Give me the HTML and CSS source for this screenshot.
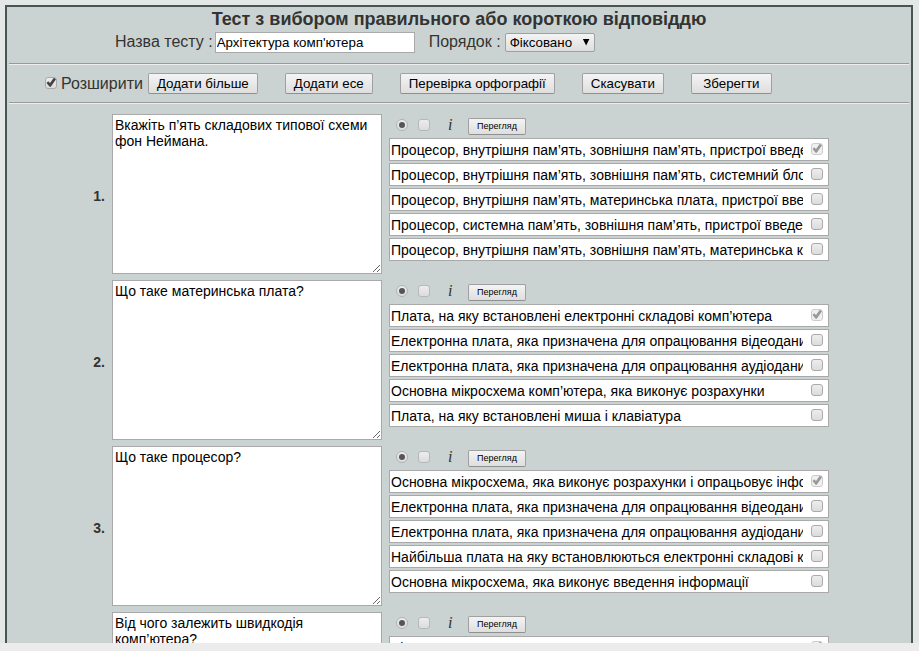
FILE: index.html
```html
<!DOCTYPE html>
<html lang="uk">
<head>
<meta charset="utf-8">
<title>Редактор тесту</title>
<link rel="stylesheet" href="styles.css">
</head>
<body>
<main class="viewport">
<form class="panel">
  <h1 class="title">Тест з вибором правильного або короткою відповіддю</h1>
  <div class="settings">
    <label for="test-name">Назва тесту :</label>
    <input class="name" id="test-name" type="text" value="Архітектура комп'ютера">
    <label class="order-label" for="order">Порядок :</label>
    <span class="select"><select id="order"><option>Фіксовано</option></select></span>
  </div>
  <hr>
  <div class="toolbar">
    <label class="expand"><input class="check" type="checkbox" checked>Розширити</label>
    <div class="actions">
      <button class="button" type="button">Додати більше</button>
      <button class="button" type="button">Додати есе</button>
      <button class="button" type="button">Перевірка орфографії</button>
      <button class="button" type="button">Скасувати</button>
      <button class="button" type="button">Зберегти</button>
    </div>
  </div>
  <hr>
  <ol class="questions">
    <li class="question">
      <span class="number">1.</span>
      <textarea aria-label="Питання 1">Вкажіть п’ять складових типової схеми фон Неймана.</textarea>
      <div class="answers">
        <div class="options"><input class="radio" type="radio" name="type1" aria-label="Тип 1" checked><input class="check" type="checkbox" aria-label="Есе 1"><i class="info">i</i><button class="button small" type="button">Перегляд</button></div>
        <div class="answer"><input type="text" aria-label="Відповідь 1" value="Процесор, внутрішня пам’ять, зовнішня пам’ять, пристрої введення, пристрої виведення"><input class="check" type="checkbox" aria-label="Правильна" checked></div>
        <div class="answer"><input type="text" aria-label="Відповідь 2" value="Процесор, внутрішня пам’ять, зовнішня пам’ять, системний блок, монітор"><input class="check" type="checkbox" aria-label="Правильна"></div>
        <div class="answer"><input type="text" aria-label="Відповідь 3" value="Процесор, внутрішня пам’ять, материнська плата, пристрої введення"><input class="check" type="checkbox" aria-label="Правильна"></div>
        <div class="answer"><input type="text" aria-label="Відповідь 4" value="Процесор, системна пам’ять, зовнішня пам’ять, пристрої введення"><input class="check" type="checkbox" aria-label="Правильна"></div>
        <div class="answer"><input type="text" aria-label="Відповідь 5" value="Процесор, внутрішня пам’ять, зовнішня пам’ять, материнська карта"><input class="check" type="checkbox" aria-label="Правильна"></div>
      </div>
    </li>
    <li class="question">
      <span class="number">2.</span>
      <textarea aria-label="Питання 2">Що таке материнська плата?</textarea>
      <div class="answers">
        <div class="options"><input class="radio" type="radio" name="type2" aria-label="Тип 2" checked><input class="check" type="checkbox" aria-label="Есе 2"><i class="info">i</i><button class="button small" type="button">Перегляд</button></div>
        <div class="answer"><input type="text" aria-label="Відповідь 1" value="Плата, на яку встановлені електронні складові комп’ютера"><input class="check" type="checkbox" aria-label="Правильна" checked></div>
        <div class="answer"><input type="text" aria-label="Відповідь 2" value="Електронна плата, яка призначена для опрацювання відеоданих"><input class="check" type="checkbox" aria-label="Правильна"></div>
        <div class="answer"><input type="text" aria-label="Відповідь 3" value="Електронна плата, яка призначена для опрацювання аудіоданих"><input class="check" type="checkbox" aria-label="Правильна"></div>
        <div class="answer"><input type="text" aria-label="Відповідь 4" value="Основна мікросхема комп’ютера, яка виконує розрахунки"><input class="check" type="checkbox" aria-label="Правильна"></div>
        <div class="answer"><input type="text" aria-label="Відповідь 5" value="Плата, на яку встановлені миша і клавіатура"><input class="check" type="checkbox" aria-label="Правильна"></div>
      </div>
    </li>
    <li class="question">
      <span class="number">3.</span>
      <textarea aria-label="Питання 3">Що таке процесор?</textarea>
      <div class="answers">
        <div class="options"><input class="radio" type="radio" name="type3" aria-label="Тип 3" checked><input class="check" type="checkbox" aria-label="Есе 3"><i class="info">i</i><button class="button small" type="button">Перегляд</button></div>
        <div class="answer"><input type="text" aria-label="Відповідь 1" value="Основна мікросхема, яка виконує розрахунки і опрацьовує інформацію"><input class="check" type="checkbox" aria-label="Правильна" checked></div>
        <div class="answer"><input type="text" aria-label="Відповідь 2" value="Електронна плата, яка призначена для опрацювання відеоданих"><input class="check" type="checkbox" aria-label="Правильна"></div>
        <div class="answer"><input type="text" aria-label="Відповідь 3" value="Електронна плата, яка призначена для опрацювання аудіоданих"><input class="check" type="checkbox" aria-label="Правильна"></div>
        <div class="answer"><input type="text" aria-label="Відповідь 4" value="Найбільша плата на яку встановлюються електронні складові комп’ютера"><input class="check" type="checkbox" aria-label="Правильна"></div>
        <div class="answer"><input type="text" aria-label="Відповідь 5" value="Основна мікросхема, яка виконує введення інформації"><input class="check" type="checkbox" aria-label="Правильна"></div>
      </div>
    </li>
    <li class="question">
      <span class="number">4.</span>
      <textarea aria-label="Питання 4">Від чого залежить швидкодія комп’ютера?</textarea>
      <div class="answers">
        <div class="options"><input class="radio" type="radio" name="type4" aria-label="Тип 4" checked><input class="check" type="checkbox" aria-label="Есе 4"><i class="info">i</i><button class="button small" type="button">Перегляд</button></div>
        <div class="answer"><input type="text" aria-label="Відповідь 1" value="Від частоти процесора"><input class="check" type="checkbox" aria-label="Правильна" checked></div>
      </div>
    </li>
  </ol>
</form>
</main>
<footer class="strip"></footer>
</body>
</html>
```
FILE: styles.css
```css
* { box-sizing: border-box; }

body {
  display: flex;
  flex-direction: column;
  height: 100vh;
  margin: 0;
  background: #e3e7e6;
  color: #333;
  font: 16px/20px "Liberation Sans", Arial, sans-serif;
}

.viewport {
  flex: 1;
  min-height: 0;
  overflow: hidden;
  padding: 5px 6px 0 5px;
}

.strip { height: 8px; background: #ececec; }

.panel {
  padding: 2px;
  border: 2px solid #4a5452;
  background: #cad3d1;
}

.title {
  margin: 0;
  font-size: 18px;
  line-height: 20px;
  text-align: center;
}

input, button, select, textarea {
  margin: 0;
  font-family: inherit;
  color: #000;
}

.settings {
  display: flex;
  align-items: center;
  height: 26px;
  margin-bottom: 8px;
  padding-left: 106px;
}

.name {
  width: 200px;
  height: 21px;
  margin-left: 2px;
  padding: 1px;
  border: 1px solid #a9a9a9;
  background: #fff;
}

.order-label { margin: 0 4px 0 14px; }

.select {
  position: relative;
  width: 90px;
  height: 19px;
}

.select::after {
  position: absolute;
  top: 6px;
  right: 5px;
  width: 7px;
  height: 7px;
  background: #000;
  clip-path: polygon(0 0, 100% 0, 50% 100%);
  content: "";
  pointer-events: none;
}

.select select {
  display: block;
  width: 100%;
  height: 100%;
  padding: 0 4px;
  border: 1px solid #a0a0a0;
  border-radius: 2px;
  background: linear-gradient(#f4f4f4, #dedede);
  appearance: none;
}

hr {
  height: 2px;
  margin: 0;
  border: 0;
  border-top: 1px solid #999;
  border-bottom: 1px solid #eee;
}

.toolbar {
  display: flex;
  align-items: center;
  gap: 5px;
  height: 37px;
  padding-left: 36px;
}

.expand { display: flex; align-items: center; gap: 4px; }

.actions { display: flex; gap: 27px; }

.button {
  min-width: 81px;
  height: 21px;
  padding: 0 8px;
  border: 1px solid #a0a0a0;
  border-bottom-color: #909090;
  border-radius: 2px;
  background: linear-gradient(#f4f4f4, #dedede);
  line-height: 19px;
}

.button.small {
  min-width: 58px;
  height: 17px;
  padding: 0 6px;
  font-size: 9px;
  line-height: 15px;
}

.check, .radio {
  position: relative;
  flex: none;
  width: 12px;
  height: 12px;
  border: 1px solid #aaa;
  border-radius: 3px;
  background: linear-gradient(#ededed, #dcdcdc);
  appearance: none;
}

.expand .check { margin-bottom: 2px; }

.check:checked::before {
  position: absolute;
  inset: 0;
  background: #444;
  clip-path: polygon(5% 55%, 22% 38%, 40% 55%, 78% 3%, 100% 18%, 48% 92%, 36% 92%);
  content: "";
}

.radio { border-radius: 50%; border-color: #b0b4b3; }

.radio::before {
  position: absolute;
  inset: 2px;
  border-radius: 50%;
  background: #555;
  content: "";
}

.questions {
  display: grid;
  gap: 6px;
  margin: 0;
  padding: 10px 0;
  list-style: none;
}

.question {
  display: grid;
  grid-template-columns: 16px 270px 440px;
  justify-content: center;
  align-items: center;
  gap: 7px;
  min-height: 160px;
}

.number {
  padding-top: 4px;
  font-size: 14px;
  font-weight: bold;
  text-align: right;
}

.question textarea {
  height: 160px;
  padding: 2px;
  border: 1px solid #a9a9a9;
  background: #fff;
  font-size: 14px;
  line-height: 16px;
  overflow: hidden;
}

.answers {
  display: grid;
  align-self: start;
  gap: 2px;
}

.options {
  display: flex;
  align-items: center;
  height: 22px;
  padding-left: 7px;
}

.options .check { margin-left: 10px; border-color: #b5b9b8; }

.info {
  width: 38px;
  padding-left: 18px;
  font-family: "Liberation Serif", serif;
}

.options .button { margin-top: 3px; }

.answer {
  display: flex;
  align-items: center;
  height: 23px;
  padding-right: 5px;
  border: 1px solid #a9a9a9;
  background: #fff;
}

.answer input[type="text"] {
  flex: 1;
  min-width: 0;
  height: 21px;
  margin-right: 8px;
  padding: 0 0 0 1px;
  border: 0;
  background: none;
  font-size: 14px;
}

.answer .check { margin-bottom: 2px; }
.answer .check:checked { border-color: #ccc; background: #f0f0f0; }
.answer .check:checked::before { background: #999; }
```
